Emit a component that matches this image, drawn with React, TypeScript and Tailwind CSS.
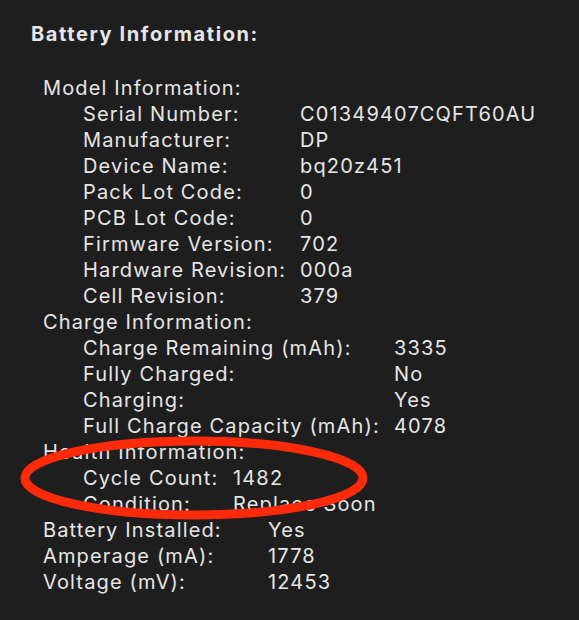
import React from 'react';

type Row = [string, string];

const modelRows: Row[] = [
  ['Serial Number:', 'C01349407CQFT60AU'],
  ['Manufacturer:', 'DP'],
  ['Device Name:', 'bq20z451'],
  ['Pack Lot Code:', '0'],
  ['PCB Lot Code:', '0'],
  ['Firmware Version:', '702'],
  ['Hardware Revision:', '000a'],
  ['Cell Revision:', '379'],
];

const chargeRows: Row[] = [
  ['Charge Remaining (mAh):', '3335'],
  ['Fully Charged:', 'No'],
  ['Charging:', 'Yes'],
  ['Full Charge Capacity (mAh):', '4078'],
];

const healthRows: Row[] = [
  ['Cycle Count:', '1482'],
  ['Condition:', 'Replace Soon'],
];

const batteryRows: Row[] = [
  ['Battery Installed:', 'Yes'],
  ['Amperage (mA):', '1778'],
  ['Voltage (mV):', '12453'],
];

// simple two column table, label column width passed in
function Rows({ rows, labelWidth }: { rows: Row[]; labelWidth: string }) {
  return (
    <div className="flex flex-col">
      {rows.map(([label, value]) => (
        <div key={label} className="flex h-[26px] items-center whitespace-nowrap">
          <span className={labelWidth}>{label}</span>
          <span>{value}</span>
        </div>
      ))}
    </div>
  );
}

function Heading({ children }: { children: React.ReactNode }) {
  return <div className="flex h-[26px] items-center whitespace-nowrap">{children}</div>;
}

export default function App() {
  return (
    <div
      className="relative w-[579px] h-[620px] overflow-hidden bg-[#1e1e1e] text-[#e6e6e6] text-[20px] leading-[26px] tracking-[1.15px]"
      style={{ fontFamily: 'Inter, "Liberation Sans", sans-serif' }}
    >
      <div className="pl-[31px] pt-[21px]">
        <div className="font-bold h-[26px] flex items-center tracking-[1.6px]">Battery Information:</div>

        <div className="pl-[12px] pt-[28px]">
          <Heading>Model Information:</Heading>
          <div className="pl-[40px]">
            <Rows rows={modelRows} labelWidth="w-[217px]" />
          </div>

          <Heading>Charge Information:</Heading>
          <div className="pl-[40px]">
            <Rows rows={chargeRows} labelWidth="w-[311px]" />
          </div>

          <Heading>Health Information:</Heading>
          <div className="pl-[40px]">
            <Rows rows={healthRows} labelWidth="w-[150px]" />
          </div>

          <Rows rows={batteryRows} labelWidth="w-[225px]" />
        </div>
      </div>

      {/* red highlight drawn over the cycle count */}
      <svg className="absolute left-0 top-0 pointer-events-none" width="579" height="620">
        <ellipse cx="194" cy="478" rx="169" ry="37" fill="none" stroke="#ff2a0a" strokeWidth="9" />
      </svg>
    </div>
  );
}
